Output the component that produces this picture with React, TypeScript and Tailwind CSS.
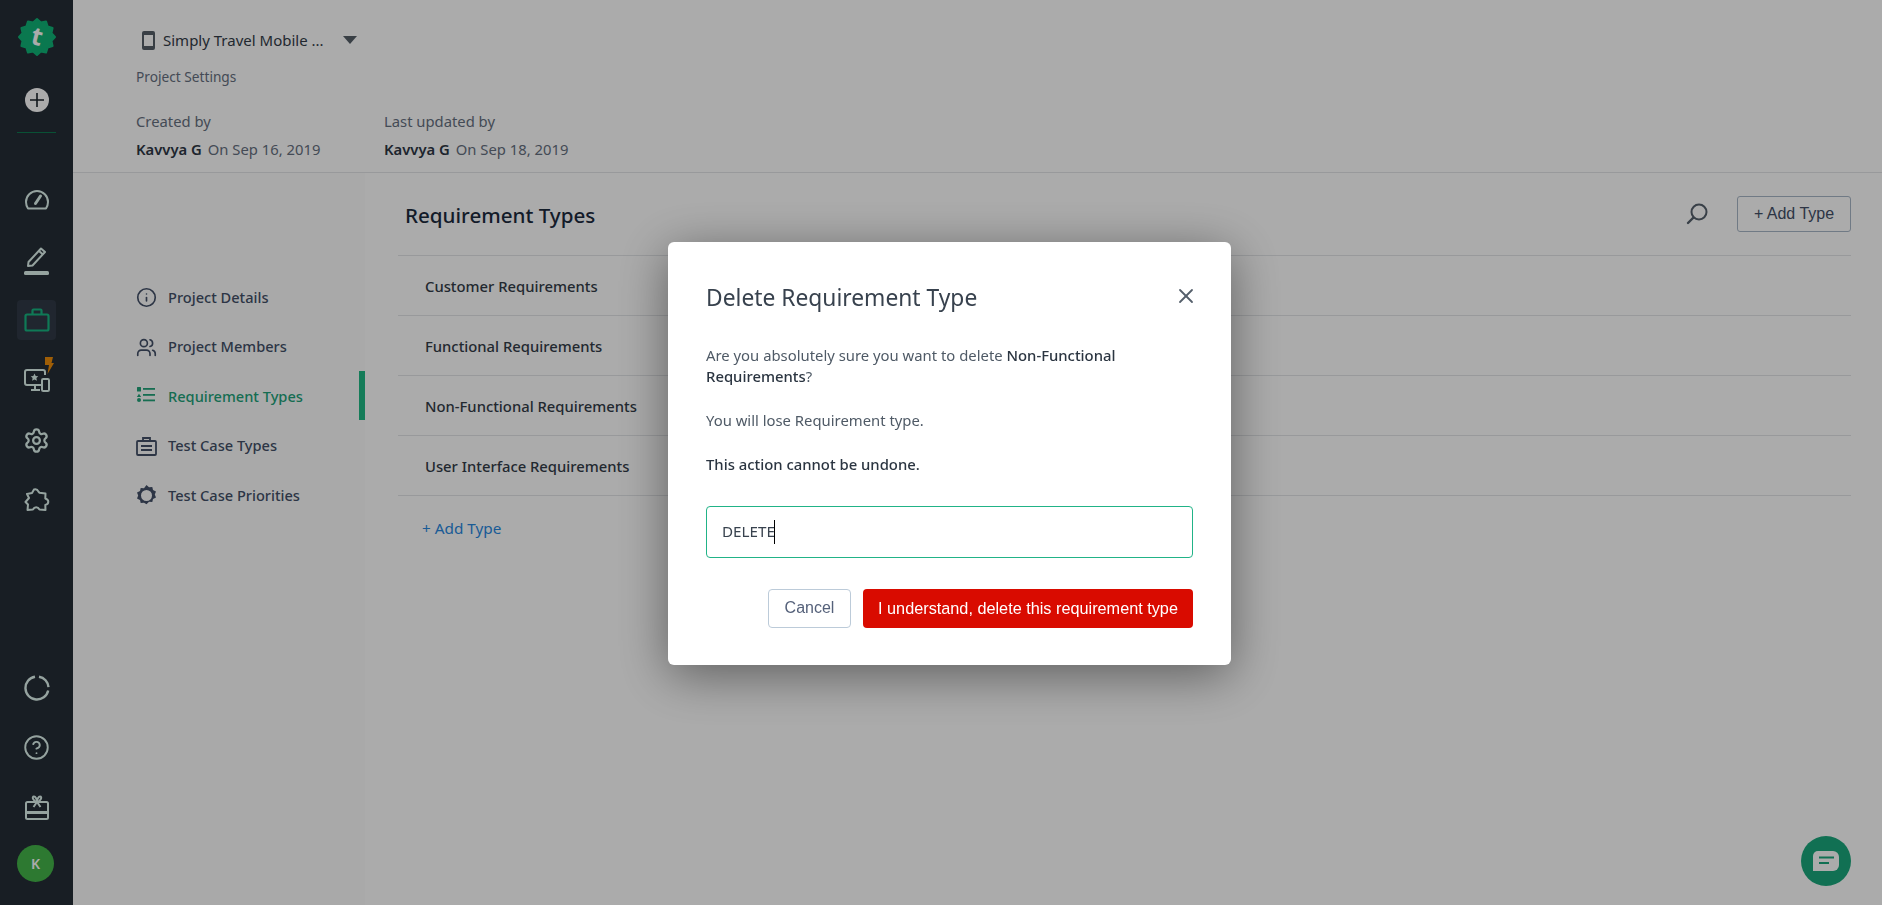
import { CircleHelp, Info, Settings, Users, X } from 'lucide-react';

const requirementTypes = [
  'Customer Requirements',
  'Functional Requirements',
  'Non-Functional Requirements',
  'User Interface Requirements',
];

const iconLine = '#dff3ee';

function Logo() {
  const points: string[] = [];
  for (let i = 0; i < 24; i++) {
    const r = i % 2 === 0 ? 18 : 15;
    const a = (i * Math.PI) / 12;
    points.push(`${20 + r * Math.cos(a)},${20 + r * Math.sin(a)}`);
  }
  return (
    <svg width="40" height="40" viewBox="0 0 40 40">
      <polygon points={points.join(' ')} fill="#0fb377" stroke="#0fb377" strokeWidth="2" strokeLinejoin="round" />
      <text x="20" y="28" textAnchor="middle" fontSize="25" fontWeight="700" fontFamily="'Noto Sans', sans-serif" fill="#ffffff" transform="rotate(14 20 20)">t</text>
    </svg>
  );
}

function GaugeIcon() {
  return (
    <svg width="26" height="24" viewBox="0 0 26 24" fill="none" stroke={iconLine} strokeWidth="2" strokeLinecap="round" strokeLinejoin="round">
      <path d="M4 20.500h18c1.200-1.800 2-4 2-6.500C24 7.900 19.100 3 13 3S2 7.900 2 14c0 2.500.8 4.700 2 6.500z" />
      <path d="M11.500 15.500 16.500 8" strokeWidth="3" />
    </svg>
  );
}

function PencilIcon() {
  return (
    <svg width="28" height="30" viewBox="0 0 28 30" fill="none" stroke={iconLine} strokeWidth="2" strokeLinejoin="round">
      <path d="M5 20 5.500 16 18 2.500l4 3.500L9.500 19.500z" />
      <path d="M16 5 20 8.500" />
      <rect x="1" y="25" width="25" height="4" rx="1.500" fill={iconLine} strokeWidth="0" />
    </svg>
  );
}

function CaseOutlineIcon() {
  return (
    <svg width="26" height="24" viewBox="0 0 26 24" fill="none" stroke="#17b581" strokeWidth="2.200" strokeLinejoin="round">
      <rect x="1.500" y="6.500" width="23" height="16" rx="1.500" />
      <path d="M8.500 6.500V2.500a1 1 0 0 1 1-1h7a1 1 0 0 1 1 1v4" />
    </svg>
  );
}

function ScreenIcon() {
  return (
    <div className="relative w-[30px] h-[36px]">
      <svg className="absolute left-0 bottom-0" width="26" height="24" viewBox="0 0 26 24" fill="none" stroke={iconLine} strokeWidth="2">
        <path d="M17 16H3a2 2 0 0 1-2-2V3a2 2 0 0 1 2-2h16a2 2 0 0 1 2 2v3" />
        <path d="M11 16v4M7 21h9" />
        <path d="m10.500 4.500 1.200 2.500 2.600.3-1.900 1.800.5 2.600-2.400-1.300-2.400 1.300.5-2.600-1.900-1.800 2.600-.3z" fill={iconLine} stroke="none" />
        <rect x="18" y="10" width="7" height="12" rx="1.200" />
      </svg>
      <svg className="absolute right-0 top-0" width="10" height="17" viewBox="0 0 10 17">
        <path d="M1 0h8L7.500 6H10L3.500 17 5 8H1z" fill="#ee8d0a" />
      </svg>
    </div>
  );
}

function LoaderIcon() {
  return (
    <svg width="26" height="26" viewBox="0 0 26 26" fill="none" stroke={iconLine} strokeWidth="2.400">
      <path d="M15 1.700a11.500 11.500 0 0 1 9.500 10.500" />
      <path d="M24.200 15.500A11.500 11.500 0 1 1 11 1.700" />
    </svg>
  );
}

function GiftIcon() {
  return (
    <svg width="26" height="26" viewBox="0 0 26 26" fill="none" stroke={iconLine} strokeWidth="2" strokeLinejoin="round">
      <rect x="2" y="7" width="22" height="17" rx="1.500" />
      <path d="M2 17.500h22" strokeWidth="3" />
      <path d="M13 7C9 6 7.500 1.500 10 1.500c1.500 0 3 3 3 5.500 0-2.500 1.500-5.500 3-5.500 2.500 0 1 4.500-3 5.500z" />
      <path d="M13 7 9.500 12M13 7l3.500 5" />
    </svg>
  );
}

function ListIcon() {
  return (
    <svg width="20" height="20" viewBox="0 0 20 20" fill="#22a37a" className="shrink-0 -mt-[2px]">
      <rect x="1" y="1" width="4" height="4.500" rx="0.500" />
      <path d="M3 7.700 5.200 11H.8z" />
      <circle cx="3" cy="14" r="2" />
      <rect x="7" y="2" width="12" height="1.800" />
      <rect x="7" y="8" width="12" height="1.800" />
      <rect x="7" y="13.500" width="12" height="1.800" />
    </svg>
  );
}

function CaseIcon() {
  return (
    <svg width="21" height="21" viewBox="0 0 21 21" fill="none" stroke="#435068" strokeWidth="1.800" className="shrink-0">
      <rect x="1" y="5" width="19" height="14" rx="1" />
      <path d="M7 5V2h7v3" />
      <path d="M5 10h11M5 14h11" />
    </svg>
  );
}

function PriorityIcon() {
  return (
    <svg width="21" height="21" viewBox="0 0 21 21" fill="#435068" className="shrink-0">
      <path fillRule="evenodd" d="m10.500 0 2.500 2.200 3.300-.3.700 3.100 3 1.500-1.200 3 1.200 3-3 1.500-.7 3.100-3.300-.3-2.500 2.500L8 17.800l-3.300.3-.7-3.100L1 13.500l1.200-3L1 7.500 4 6l.7-3.100 3.300.3zm0 5a5.500 5.500 0 1 0 0 11 5.500 5.500 0 0 0 0-11z" />
    </svg>
  );
}

function PuzzleIcon() {
  return (
    <svg width="26" height="26" viewBox="0 0 26 26" fill="none" stroke={iconLine} strokeWidth="2" strokeLinejoin="round">
      <path d="M10 2.500c2-.8 3.500 0 4.500 2.200l1 1 6 .8-.2 5c1.800.6 3 1.700 3 3.300s-1.200 2.800-3 3.200l.2 5-6-.5c-.8-1.500-1.800-2.300-3.300-2.300s-2.500.8-3.300 2.300L3.500 23l.5-5.500-2.500-2.500L5 11 3 7l5-1z" />
    </svg>
  );
}

function SearchIcon() {
  return (
    <svg width="24" height="24" viewBox="0 0 24 24" fill="none" stroke="#55606c" strokeWidth="2">
      <circle cx="14" cy="10" r="7.500" />
      <path d="M8.500 15.500 3 21" strokeLinecap="round" strokeWidth="2.400" />
    </svg>
  );
}

function PhoneIcon() {
  return (
    <svg width="13" height="19" viewBox="0 0 13 19" fill="#555f68">
      <path fillRule="evenodd" d="M2 0h9a2 2 0 0 1 2 2v15a2 2 0 0 1-2 2H2a2 2 0 0 1-2-2V2a2 2 0 0 1 2-2zm0 4v11h9V4z" />
    </svg>
  );
}

function Sidebar() {
  return (
    <aside className="w-[73px] h-full shrink-0 bg-[#242d36] flex flex-col items-center">
      <div className="mt-[17px] h-[40px] flex items-center justify-center">
        <Logo />
      </div>
      <div className="mt-[31px] w-6 h-6 rounded-full bg-white flex items-center justify-center">
        <svg width="14" height="14" viewBox="0 0 14 14" stroke="#1b232b" strokeWidth="1.600"><path d="M7 0v14M0 7h14" /></svg>
      </div>
      <div className="mt-[20px] w-[39px] h-px bg-[#0e7a50]" />
      <div className="mt-[55px] h-6 flex items-center"><GaugeIcon /></div>
      <div className="mt-[34px] h-[30px] flex items-center"><PencilIcon /></div>
      <div className="mt-[24px] w-[39px] h-[40px] rounded-[4px] bg-[#303a46] flex items-center justify-center">
        <CaseOutlineIcon />
      </div>
      <div className="mt-[17px] h-[36px] ml-1"><ScreenIcon /></div>
      <div className="mt-[35px] h-6 flex items-center"><Settings size={27} strokeWidth={2} className="text-[#dff3ee]" /></div>
      <div className="mt-[35px] h-[26px]"><PuzzleIcon /></div>
      <div className="mt-auto h-[26px] -translate-y-px"><LoaderIcon /></div>
      <div className="mt-[33px] h-[26px] -translate-y-px"><CircleHelp size={27} strokeWidth={1.700} className="text-[#dff3ee]" /></div>
      <div className="mt-[34px] h-[26px]"><GiftIcon /></div>
      <div className="mt-[24px] mb-[23px] w-[37px] h-[37px] rounded-full bg-[#43b549] text-white text-[14px] font-semibold flex items-center justify-center -translate-x-px">K</div>
    </aside>
  );
}

function Header() {
  return (
    <header className="h-[173px] shrink-0 border-b border-[#e3e5e8] pl-[63px] pt-[29px]">
      <div className="flex items-center h-[22px]">
        <span className="ml-[6px]"><PhoneIcon /></span>
        <span className="ml-[8px] text-[15px] text-[#333c48] w-[180px]">Simply Travel Mobile ...</span>
        <span className="w-0 h-0 border-x-[7px] border-x-transparent border-t-[8px] border-t-[#555f68]" />
      </div>
      <p className="mt-[16px] text-[13.700px] leading-[20px] text-[#667080]">Project Settings</p>
      <div className="mt-[24px] flex">
        <div className="w-[248px]">
          <p className="text-[14.800px] leading-[20px] text-[#667080]">Created by</p>
          <p className="mt-[8px] text-[14.800px] leading-[20px] text-[#667080]">
            <span className="font-semibold text-[#2d3644] mr-[6px]">Kavvya G</span>On Sep 16, 2019
          </p>
        </div>
        <div>
          <p className="text-[14.800px] leading-[20px] text-[#667080]">Last updated by</p>
          <p className="mt-[8px] text-[14.800px] leading-[20px] text-[#667080]">
            <span className="font-semibold text-[#2d3644] mr-[6px]">Kavvya G</span>On Sep 18, 2019
          </p>
        </div>
      </div>
    </header>
  );
}

function SettingsNav() {
  const itemClass = 'h-[49.500px] flex items-center gap-[11px] text-[14.600px] font-medium text-[#435068] whitespace-nowrap';
  return (
    <nav className="w-[292px] shrink-0 pt-[100px] pl-[63px] bg-[#fdfdfd]">
      <div className={itemClass}><Info size={21} strokeWidth={1.900} className="shrink-0" />Project Details</div>
      <div className={itemClass}><Users size={21} strokeWidth={1.900} className="shrink-0" />Project Members</div>
      <div className="relative h-[49.500px] flex items-center gap-[11px] text-[14.600px] font-medium text-[#22a37a] whitespace-nowrap">
        <ListIcon />
        <span className="ml-px">Requirement Types</span>
        <span className="absolute right-0 -top-px w-[6px] h-[49px] bg-[#20b985]" />
      </div>
      <div className={itemClass}><CaseIcon />Test Case Types</div>
      <div className={itemClass}><PriorityIcon />Test Case Priorities</div>
    </nav>
  );
}

function RequirementList() {
  return (
    <section className="flex-1 pl-[33px] pr-[31px]">
      <div className="h-[83px] flex items-center justify-between border-b border-[#e3e5e8] pl-[7px]">
        <h2 className="text-[20.600px] font-medium text-[#1c2a3d] pt-[2px]">Requirement Types</h2>
        <div className="flex items-center gap-[28px]">
          <SearchIcon />
          <button className="w-[114px] h-[36px] rounded-[3px] border border-[#a8b7c6] text-[16px] text-[#435068] font-['Liberation_Sans',sans-serif]">+ Add Type</button>
        </div>
      </div>
      {requirementTypes.map((name) => (
        <div key={name} className="h-[60px] flex items-center pl-[27px] pt-px border-b border-[#e3e5e8] text-[14.800px] font-medium text-[#333c48]">
          {name}
        </div>
      ))}
      <p className="mt-[21px] pl-[24px] text-[15.300px] text-[#2888df]">+ Add Type</p>
    </section>
  );
}

function DeleteDialog() {
  return (
    <div className="fixed inset-0 bg-black/33 flex items-center pl-[668px]">
      <div className="w-[563px] h-[423px] mt-[1px] bg-white rounded-[6px] shadow-[0_10px_50px_rgba(0,0,0,0.45)] px-[38px] pt-[38px]">
        <div className="flex items-center justify-between h-[34px]">
          <h3 className="text-[22.800px] text-[#38424e] mt-[4px]">Delete Requirement Type</h3>
          <X size={24} strokeWidth={1.800} className="text-[#555f6b] -mr-[5px] -mt-[2px]" />
        </div>
        <p className="mt-[31px] text-[14.850px] leading-[21.600px] text-[#4f5a66]">
          Are you absolutely sure you want to delete <span className="font-medium text-[#2b3541]">Non-Functional</span>
          <br />
          <span className="font-medium text-[#2b3541]">Requirements</span>?
        </p>
        <p className="mt-[21px] text-[14.850px] leading-[22px] text-[#4f5a66]">You will lose Requirement type.</p>
        <p className="mt-[22px] text-[14.850px] leading-[22px] font-medium text-[#2b3541]">This action cannot be undone.</p>
        <div className="mt-[31px] h-[52px] rounded-[4px] border border-[#21b387] flex items-center pl-[15px] text-[15.200px] text-[#38424e]">
          <span>DELETE</span>
          <span className="w-px h-[24px] bg-black -ml-px" />
        </div>
        <div className="mt-[31px] flex justify-end gap-[12px]">
          <button className="w-[83px] h-[39px] rounded-[4px] border border-[#bccbd9] text-[16px] text-[#55617a] font-['Liberation_Sans',sans-serif]">Cancel</button>
          <button className="w-[330px] h-[39px] rounded-[4px] bg-[#d90b00] text-[16.250px] text-white font-['Liberation_Sans',sans-serif]">I understand, delete this requirement type</button>
        </div>
      </div>
    </div>
  );
}

export default function App() {
  return (
    <div className="h-[905px] w-[1882px] overflow-hidden flex bg-white font-['Noto_Sans',sans-serif]">
      <Sidebar />
      <main className="flex-1 flex flex-col relative">
        <Header />
        <div className="flex-1 flex">
          <SettingsNav />
          <RequirementList />
        </div>
        <button className="absolute right-[31px] bottom-[19px] w-[50px] h-[50px] rounded-full bg-[#1aa87c] flex items-center justify-center">
          <svg width="26" height="20" viewBox="0 0 26 20">
            <path d="M0 5a5 5 0 0 1 5-5h15a6 6 0 0 1 6 6v8a6 6 0 0 1-6 6H0z" fill="#ffffff" />
            <path d="M6 6.500h15M6 12h10" stroke="#1aa87c" strokeWidth="1.800" />
          </svg>
        </button>
      </main>
      <DeleteDialog />
    </div>
  );
}
